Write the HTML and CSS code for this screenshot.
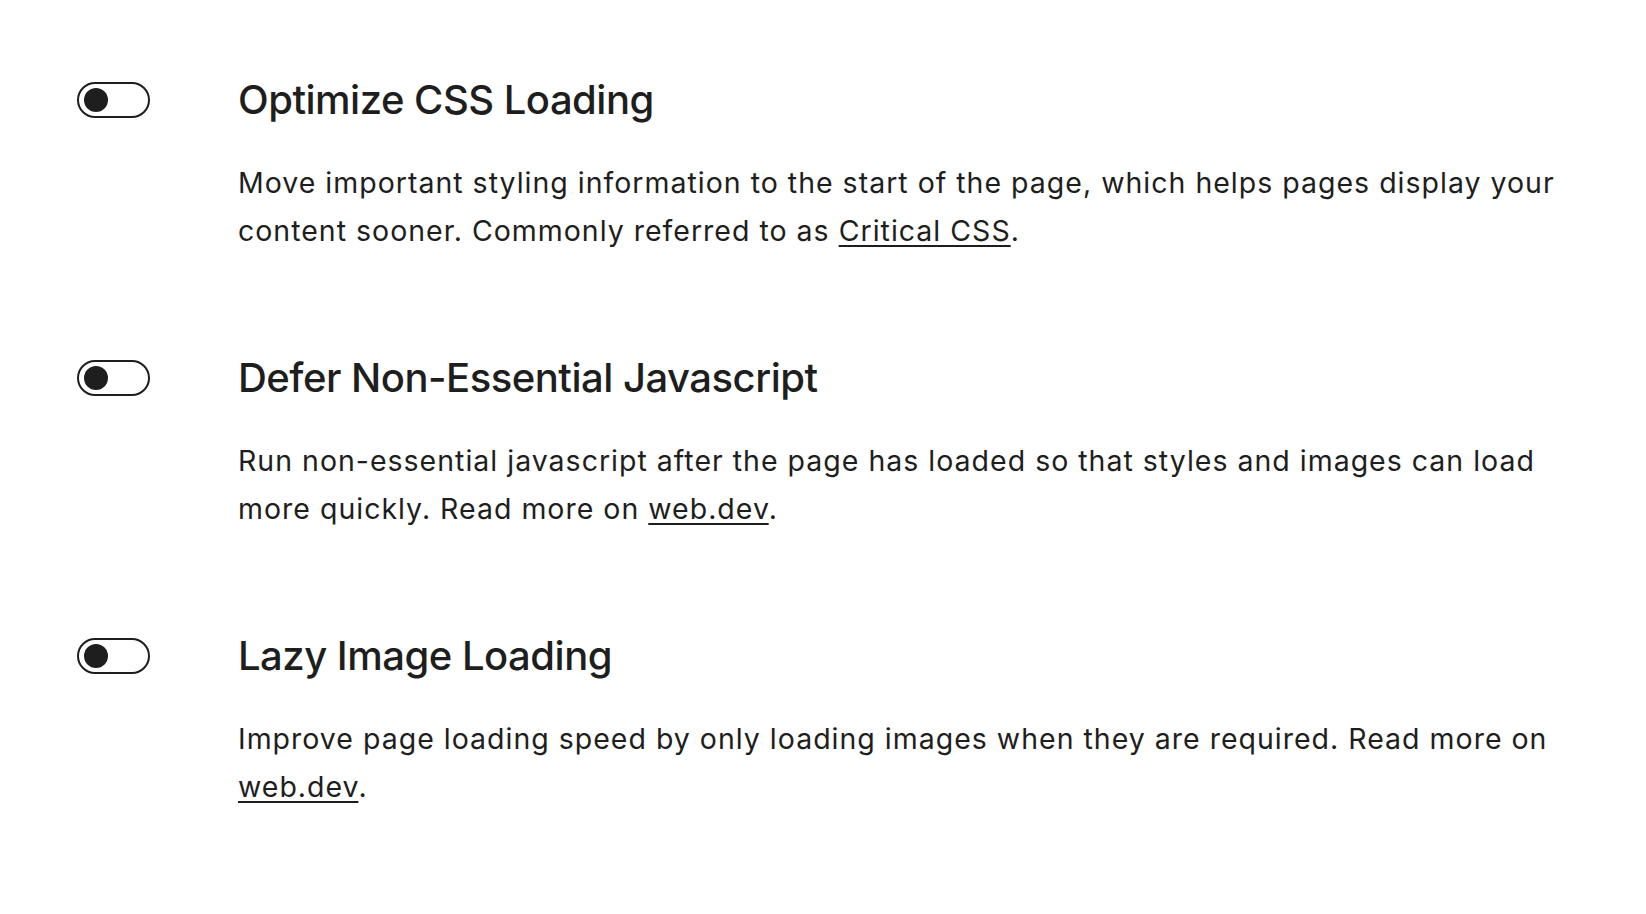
FILE: index.html
```html
<!DOCTYPE html>
<html lang="en">
<head>
<meta charset="utf-8">
<title>Performance settings</title>
<link rel="stylesheet" href="styles.css">
</head>
<body>
<main class="settings">
  <section class="setting">
    <div class="toggle"><span class="knob"></span></div>
    <div class="content">
      <h2 class="title">Optimize CSS Loading</h2>
      <p class="desc">Move important styling information to the start of the page, which helps pages display your content sooner. Commonly referred to as <a href="#">Critical CSS</a>.</p>
    </div>
  </section>
  <section class="setting">
    <div class="toggle"><span class="knob"></span></div>
    <div class="content">
      <h2 class="title">Defer Non-Essential Javascript</h2>
      <p class="desc">Run non-essential javascript after the page has loaded so that styles and images can load more quickly. Read more on <a href="#">web.dev</a>.</p>
    </div>
  </section>
  <section class="setting">
    <div class="toggle"><span class="knob"></span></div>
    <div class="content">
      <h2 class="title">Lazy Image Loading</h2>
      <p class="desc">Improve page loading speed by only loading images when they are required. Read more on <a href="#">web.dev</a>.</p>
    </div>
  </section>
</main>
</body>
</html>
```
FILE: styles.css
```css
html, body {
  margin: 0;
  background: #ffffff;
}
body {
  font-family: Inter, "Noto Sans", "Liberation Sans", sans-serif;
  color: #1e1e1e;
}
.settings {
  padding: 76px 0 0 77px;
  display: flex;
  flex-direction: column;
  gap: 100px;
}
.setting {
  display: flex;
  align-items: flex-start;
  gap: 88px;
}
.toggle {
  box-sizing: border-box;
  flex: none;
  width: 73px;
  height: 36px;
  margin-top: 6px;
  border: 2.5px solid #1e1e1e;
  border-radius: 18px;
  display: flex;
  align-items: center;
  padding-left: 4.5px;
}
.knob {
  width: 24px;
  height: 24px;
  border-radius: 50%;
  background: #1e1e1e;
}
.content {
  width: 1345px;
}
.title {
  margin: 0 0 35px;
  font-size: 40px;
  line-height: 48px;
  font-weight: 500;
  letter-spacing: -0.5px;
}
.desc {
  margin: 0;
  font-size: 28.5px;
  line-height: 47.5px;
  font-weight: 400;
  letter-spacing: 1px;
}
.desc a {
  color: inherit;
  text-decoration: underline;
  text-decoration-thickness: 2px;
  text-underline-offset: 4px;
}
```
